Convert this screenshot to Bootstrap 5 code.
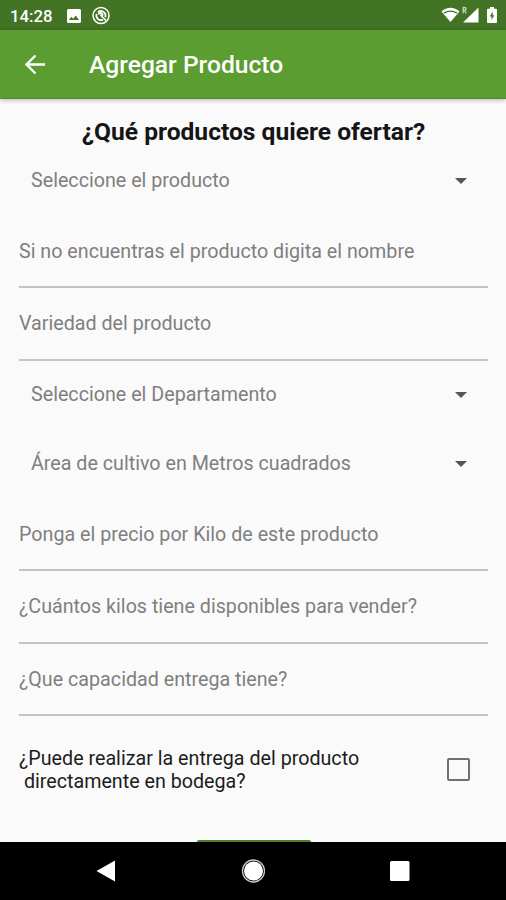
<!DOCTYPE html>
<html lang="es">
<head>
<meta charset="utf-8">
<meta name="viewport" content="width=device-width, initial-scale=1">
<title>Agregar Producto</title>
<link href="https://cdn.jsdelivr.net/npm/bootstrap@5.3.0/dist/css/bootstrap.min.css" rel="stylesheet">
<style>
body { font-family: Roboto, "Liberation Sans", sans-serif; background: #fafafa; height: 900px; overflow: hidden; font-size: 19.7px; line-height: 23px; color: #1c1c1c; }
svg { display: block; flex: none; }
.status-bar { height: 30px; background: #437425; padding: 2px 7px 0 10px; }
.clock { font-size: 16.8px; font-weight: 500; line-height: 28px; width: 56px; }
.app-bar { height: 69px; background: #5b9d31; border-bottom: 1px solid #498f1c; box-shadow: 0 1px 5px rgba(0,0,0,.28); padding-left: 23px; }
.app-title { font-size: 24.6px; font-weight: 500; margin-left: 42px; line-height: 30px; padding-top: 2px; }
.form-area { padding: 0 18px 0 19px; }
.heading { height: 47px; font-size: 24.6px; font-weight: 700; line-height: 30px; padding-top: 18px; color: #151515; }
.pick { height: 69px; padding: 0 21px 0 12px; color: #7f7f7f; }
.pick svg { margin-top: 2px; }
.entry { height: 72.5px; color: #7f7f7f; padding-top: 2px; }
.entry::after { content: ""; height: 2px; margin-bottom: -1px; background: #c4c4c4; }
.entry span, .pick span, .question { white-space: pre; }
.delivery { height: 125px; padding-right: 18px; padding-bottom: 16px; }
.box { width: 23px; height: 23px; border: 2px solid #707070; border-radius: 2px; }
.submit-edge { height: 2px; width: 114px; background: #4c8129; border-radius: 3px 3px 0 0; }
.system-nav { height: 58px; background: #000; padding: 0 96px 0 96px; }
</style>
<script src="https://cdn.jsdelivr.net/npm/bootstrap@5.3.0/dist/js/bootstrap.bundle.min.js"></script>
</head>
<body class="d-flex flex-column">
<div class="status-bar d-flex align-items-center text-white">
  <span class="clock">14:28</span>
  <svg width="16" height="16" viewBox="0 0 16 16"><path fill="#fff" fill-rule="evenodd" d="M2.5 1h11A1.5 1.5 0 0 1 15 2.5v11a1.5 1.5 0 0 1-1.500 1.500h-11A1.500 1.500 0 0 1 1 13.500v-11A1.500 1.500 0 0 1 2.500 1zM3 12h10L9.800 7.600 7.200 10.800 5.400 8.800z"/></svg>
  <svg class="ms-2" width="20" height="20" viewBox="0 0 20 20" fill="none" stroke="#fff"><circle cx="11" cy="9.500" r="8" stroke-width="1.500"/><path stroke-width="1.700" d="M15.300 11.200A4.700 4.700 0 0 0 8 6M6.700 7.700A4.700 4.700 0 0 0 13 13.700M10.500 9 16 14.500"/><path stroke-width="2.200" d="M8 7.500 11 7l2 2.500"/></svg>
  <div class="ms-auto">
  <svg width="58" height="20" viewBox="0 0 58 20"><path fill="#fff" d="M.5 5.500C6 .6 13 .6 18.500 5.500L9.500 16z"/><path d="M3 7.100Q9.500 3.100 16 7.100" fill="none" stroke="#437425" stroke-width="1.300"/><path fill="#fff" d="M37.500 1.500v15H22z"/><path d="M22.200 7.300V1.500h1.500a1.300 1.300 0 0 1 0 2.800h-1.500M23.500 4.500l1.700 2.800" fill="none" stroke="#c6d8ba" stroke-width="1.300"/><path fill="#fff" d="M49 1h4v1.700h2q1 0 1 1V16q0 1-1 1h-8q-1 0-1-1V3.700q0-1 1-1H49z"/><path fill="#437425" d="M51.700 5.500 48.700 10.500h1.800v3.500l2.900-4.700h-1.700z"/></svg>
  </div>
</div>
<header class="app-bar d-flex align-items-center text-white">
  <svg width="24" height="24" viewBox="0 0 24 24" fill="none" stroke="#fff" stroke-width="2.400"><path d="M22 12.500H4M12.500 3.500 3.500 12.500l9 9"/></svg>
  <div class="app-title">Agregar Producto</div>
</header>
<main class="form-area flex-grow-1 d-flex flex-column">
  <div class="heading text-center">¿Qué productos quiere ofertar?</div>
  <div class="pick d-flex align-items-center justify-content-between"><span>Seleccione el producto</span><svg width="12" height="6" viewBox="0 0 12 6"><path fill="#555" d="M0 0h12L6 6z"/></svg></div>
  <div class="entry d-flex flex-column"><span class="my-auto">Si no encuentras el producto digita el nombre</span></div>
  <div class="entry d-flex flex-column"><span class="my-auto">Variedad del producto</span></div>
  <div class="pick d-flex align-items-center justify-content-between"><span>Seleccione el Departamento</span><svg width="12" height="6" viewBox="0 0 12 6"><path fill="#555" d="M0 0h12L6 6z"/></svg></div>
  <div class="pick d-flex align-items-center justify-content-between"><span>Área de cultivo en Metros cuadrados</span><svg width="12" height="6" viewBox="0 0 12 6"><path fill="#555" d="M0 0h12L6 6z"/></svg></div>
  <div class="entry d-flex flex-column"><span class="my-auto">Ponga el precio por Kilo de este producto</span></div>
  <div class="entry d-flex flex-column"><span class="my-auto">¿Cuántos kilos tiene disponibles para vender?</span></div>
  <div class="entry d-flex flex-column"><span class="my-auto">¿Que capacidad entrega tiene?</span></div>
  <div class="delivery d-flex align-items-center justify-content-between"><div class="question">¿Puede realizar la entrega del producto
 directamente en bodega?</div><div class="box"></div></div>
  <div class="submit-edge mx-auto mt-auto"></div>
</main>
<nav class="system-nav d-flex align-items-center justify-content-between">
  <svg width="19" height="22" viewBox="0 0 19 22"><path fill="#fff" d="M19 0.500v21L.5 11z"/></svg>
  <svg width="24" height="24" viewBox="0 0 24 24"><circle cx="12.500" cy="12" r="11" fill="none" stroke="#ccc" stroke-width="1.300"/><circle cx="12.500" cy="12" r="9.500" fill="#fff"/></svg>
  <svg width="20" height="20" viewBox="0 0 20 20"><rect width="19.500" height="20" rx="1.500" fill="#fff"/></svg>
</nav>
</body>
</html>
